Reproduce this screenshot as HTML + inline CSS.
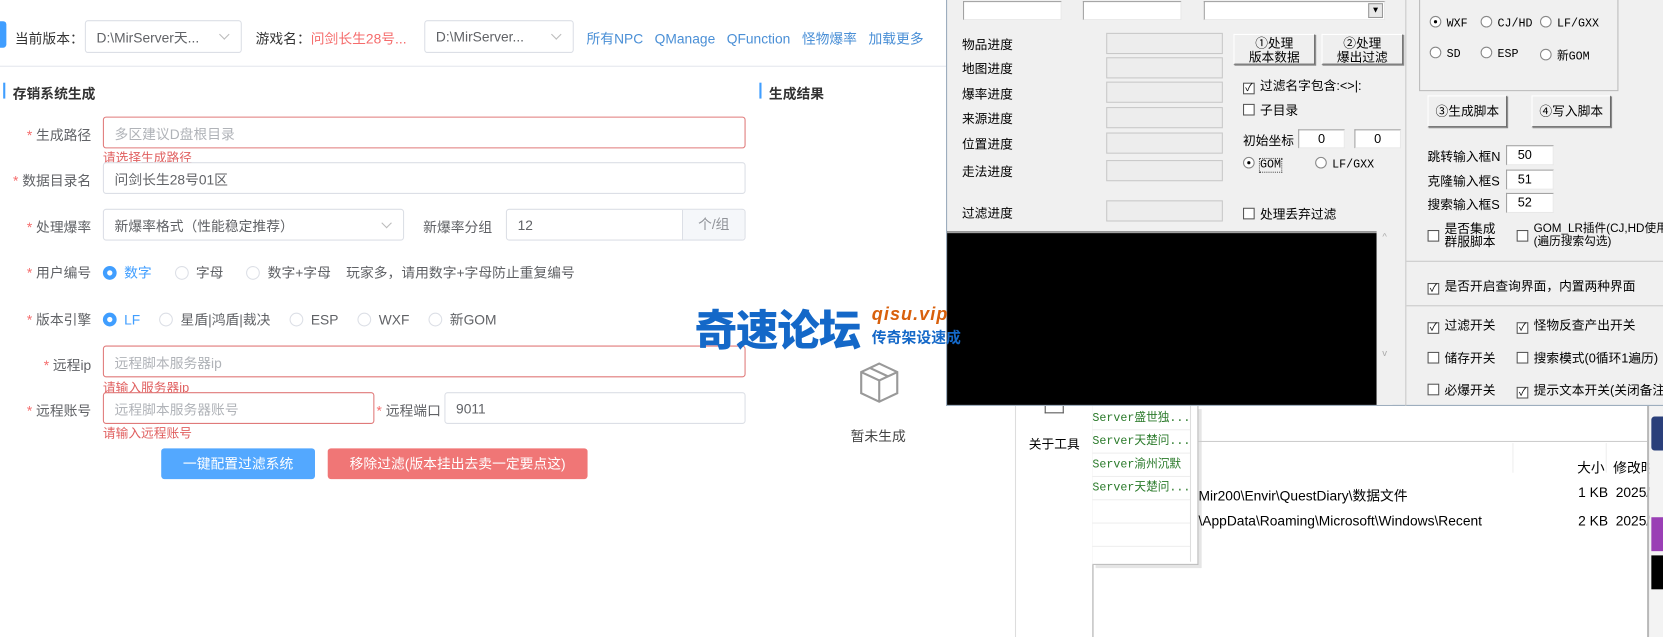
<!DOCTYPE html>
<html><head><meta charset="utf-8"><style>
*{margin:0;padding:0;box-sizing:border-box}
html,body{width:1663px;height:637px;overflow:hidden;background:#fff}
#w{position:absolute;left:0;top:0;width:1568px;height:601px;transform:scale(1.06059,1.05990);transform-origin:0 0;font-family:"Liberation Sans","Noto Sans CJK SC",sans-serif;font-size:13px;color:#606266}
.a{position:absolute;white-space:nowrap}
.in{position:absolute;border:1px solid #dcdfe6;border-radius:3px;background:#fff;padding-left:10px;display:flex;align-items:center}
.err{border-color:#e07a7a}
.ph{color:#b0b3b8}
.et{position:absolute;color:#e06060;font-size:12px}
.lb{position:absolute;text-align:right;width:86px;left:0}
.lb:before{content:"* ";color:#f56c6c}
.chev{position:absolute;right:12px;top:9px;width:7px;height:7px;border-right:1px solid #bbb;border-bottom:1px solid #bbb;transform:rotate(45deg)}
.rd{display:inline-block;width:13px;height:13px;border:1px solid #dcdfe6;border-radius:50%;vertical-align:-2px;margin-right:7px}
.rd.on{border:4px solid #409eff}
.win{font-family:"Liberation Sans","Noto Sans CJK SC",sans-serif;font-size:12px;color:#000}
.tb{position:absolute;background:#fff;border:1px solid #a0a0a0;border-right-color:#e8e8e8;border-bottom-color:#e8e8e8}
.pb{position:absolute;background:#ededed;border:1px solid #c8c8c8;height:20px;width:110px;left:1043px}
.bt{position:absolute;background:#efefef;border:1px solid #fff;border-right-color:#6a6a6a;border-bottom-color:#6a6a6a;box-shadow:1px 1px 0 #888;text-align:center;line-height:13px;font-size:12px}
.cb{display:inline-block;width:11px;height:11px;border:1px solid #555;background:#fff;vertical-align:-1px;margin-right:5px;font-size:10px;line-height:9px;text-align:center}
.wr{display:inline-block;width:11px;height:11px;border:1px solid #888;border-radius:50%;background:#fff;vertical-align:-1px;margin-right:5px;position:relative}
.wr.on:after{content:"";position:absolute;left:3px;top:3px;width:3px;height:3px;background:#000;border-radius:50%}
.m{font-family:"Liberation Mono","Noto Sans CJK SC",monospace;font-size:11px}
.logo{z-index:5}
</style></head><body><div id="w">
<!-- header -->
<div class="a" style="left:0;top:20px;width:6px;height:25px;background:#409eff;border-radius:0 3px 3px 0"></div>
<div class="a" style="left:14px;top:26px;color:#333">当前版本：</div>
<div class="in" style="left:80px;top:19px;width:148px;height:31px">D:\MirServer天...<i class="chev"></i></div>
<div class="a" style="left:241px;top:26px;color:#333">游戏名：<span style="color:#f56c6c">问剑长生28号...</span></div>
<div class="in" style="left:400px;top:19px;width:141px;height:31px">D:\MirServer...<i class="chev"></i></div>
<div class="a" style="left:553px;top:26px;color:#4a8fd6">所有NPC&nbsp;&nbsp;&nbsp;QManage&nbsp;&nbsp;&nbsp;QFunction&nbsp;&nbsp;&nbsp;怪物爆率&nbsp;&nbsp;&nbsp;加载更多</div>
<div class="a" style="left:0;top:62px;width:892px;height:1px;background:#e4e7ed"></div>
<div class="a" style="left:3px;top:78px;width:2px;height:15px;background:#409eff"></div>
<div class="a" style="left:12px;top:78px;font-weight:bold;color:#333">存销系统生成</div>
<div class="a" style="left:716px;top:78px;width:2px;height:15px;background:#409eff"></div>
<div class="a" style="left:725px;top:78px;font-weight:bold;color:#333">生成结果</div>
<!-- form -->
<div class="lb" style="top:117px">生成路径</div>
<div class="in err" style="left:97px;top:110px;width:606px;height:30px"><span class="ph">多区建议D盘根目录</span></div>
<div class="et" style="left:97px;top:140px">请选择生成路径</div>
<div class="lb" style="top:160px">数据目录名</div>
<div class="in" style="left:97px;top:153px;width:606px;height:30px">问剑长生28号01区</div>
<div class="lb" style="top:204px">处理爆率</div>
<div class="in" style="left:97px;top:197px;width:284px;height:30px">新爆率格式（性能稳定推荐）<i class="chev"></i></div>
<div class="a" style="left:399px;top:204px">新爆率分组</div>
<div class="in" style="left:477px;top:197px;width:226px;height:30px">12</div>
<div class="a" style="left:643px;top:198px;width:59px;height:28px;background:#f5f7fa;border-left:1px solid #dcdfe6;text-align:center;line-height:28px;color:#909399;border-radius:0 3px 3px 0">个/组</div>
<div class="lb" style="top:247px">用户编号</div>
<div class="a" style="left:97px;top:247px"><span class="rd on"></span><span style="color:#409eff">数字</span>&nbsp;&nbsp;&nbsp;&nbsp;&nbsp;&nbsp;<span class="rd"></span>字母&nbsp;&nbsp;&nbsp;&nbsp;&nbsp;&nbsp;<span class="rd"></span>数字+字母&nbsp;&nbsp;&nbsp;&nbsp;玩家多，请用数字+字母防止重复编号</div>
<div class="lb" style="top:291px">版本引擎</div>
<div class="a" style="left:97px;top:291px"><span class="rd on"></span><span style="color:#409eff">LF</span>&nbsp;&nbsp;&nbsp;&nbsp;&nbsp;<span class="rd"></span>星盾|鸿盾|裁决&nbsp;&nbsp;&nbsp;&nbsp;&nbsp;<span class="rd"></span>ESP&nbsp;&nbsp;&nbsp;&nbsp;&nbsp;<span class="rd"></span>WXF&nbsp;&nbsp;&nbsp;&nbsp;&nbsp;<span class="rd"></span>新GOM</div>
<div class="lb" style="top:334px">远程ip</div>
<div class="in err" style="left:97px;top:326px;width:606px;height:30px"><span class="ph">远程脚本服务器ip</span></div>
<div class="et" style="left:97px;top:357px">请输入服务器ip</div>
<div class="lb" style="top:377px">远程账号</div>
<div class="in err" style="left:97px;top:370px;width:256px;height:30px"><span class="ph">远程脚本服务器账号</span></div>
<div class="et" style="left:97px;top:400px">请输入远程账号</div>
<div class="a" style="left:355px;top:377px;width:58px;text-align:right"><span style="color:#f56c6c">* </span>远程端口</div>
<div class="in" style="left:419px;top:370px;width:284px;height:30px">9011</div>
<div class="a" style="left:152px;top:423px;width:145px;height:29px;background:#53a8ff;color:#fff;border-radius:3px;text-align:center;line-height:29px">一键配置过滤系统</div>
<div class="a" style="left:309px;top:423px;width:245px;height:29px;background:#f07676;color:#fff;border-radius:3px;text-align:center;line-height:29px">移除过滤(版本挂出去卖一定要点这)</div>
<!-- watermark logo -->
<div class="a logo" style="left:655px;top:280px;font-size:40px;font-weight:900;color:#1468c8;letter-spacing:-1px;font-family:'Noto Sans CJK SC',sans-serif">奇速论坛</div>
<div class="a logo" style="left:822px;top:287px;font-size:17px;font-weight:bold;font-style:italic;color:#d8600c;letter-spacing:1px">qisu.vip</div>
<div class="a logo" style="left:822px;top:308px;font-size:14px;font-weight:bold;color:#1468c8">传奇架设速成</div>
<svg class="a" style="left:808px;top:340px" width="42" height="42" viewBox="0 0 42 42" fill="none" stroke="#999" stroke-width="2"><path d="M21 3 L38 11 L38 31 L21 39 L4 31 L4 11 Z M4 11 L21 19 L38 11 M21 19 L21 39 M12 7 L29 15"/></svg>
<div class="a" style="left:802px;top:401px;color:#444">暂未生成</div>
<!-- background windows -->
<div class="a" style="left:957px;top:383px;width:1px;height:218px;background:#ddd"></div>
<div class="a" style="left:985px;top:383px;width:18px;height:7px;border:1px solid #555;border-top:none"></div>
<div class="a win" style="left:970px;top:410px">关于工具</div>
<div class="a" style="left:1030px;top:383px;width:1px;height:218px;background:#aaa"></div>
<div class="a" style="left:1030px;top:383px;width:100px;height:150px;background:#fff;border:1px solid #bbb;border-top:none;border-left:none;box-shadow:3px 3px 0 #e5e5e5"></div>
<div class="a" style="left:1030px;top:405px;width:92px;height:1px;background:#eee"></div>
<div class="a" style="left:1030px;top:427px;width:92px;height:1px;background:#eee"></div>
<div class="a" style="left:1030px;top:449px;width:92px;height:1px;background:#eee"></div>
<div class="a" style="left:1030px;top:471px;width:92px;height:1px;background:#eee"></div>
<div class="a" style="left:1030px;top:493px;width:92px;height:1px;background:#eee"></div>
<div class="a" style="left:1030px;top:515px;width:92px;height:1px;background:#eee"></div>
<div class="a" style="left:1122px;top:383px;width:1px;height:147px;background:#ddd"></div>
<div class="a m" style="left:1030px;top:384px;color:#2a7a2a;line-height:22px">Server盛世独...<br>Server天楚问...<br>Server渝州沉默<br>Server天楚问...</div>
<div class="a" style="left:1130px;top:416px;width:423px;height:1px;background:#ccc"></div>
<div class="a" style="left:1426px;top:418px;width:1px;height:28px;background:#eee"></div>
<div class="a" style="left:1514px;top:418px;width:1px;height:28px;background:#eee"></div>
<div class="a win" style="left:1487px;top:431px;font-size:13px">大小</div><div class="a win" style="left:1521px;top:431px;font-size:13px">修改时</div>
<div class="a win" style="left:1130px;top:457px;font-size:13px">Mir200\Envir\QuestDiary\数据文件</div>
<div class="a win" style="left:1130px;top:484px;font-size:13px">\AppData\Roaming\Microsoft\Windows\Recent</div>
<div class="a win" style="left:1488px;top:457px;font-size:13px">1 KB&nbsp;&nbsp;2025/9</div>
<div class="a win" style="left:1488px;top:484px;font-size:13px">2 KB&nbsp;&nbsp;2025/1</div>
<div class="a" style="left:1553px;top:383px;width:2px;height:218px;background:#b8b8b8"></div>
<div class="a" style="left:1555px;top:383px;width:13px;height:218px;background:#f3f3f3"></div>
<div class="a" style="left:1557px;top:393px;width:11px;height:32px;background:#2a3f7a;border-radius:3px 0 0 3px"></div>
<div class="a" style="left:1557px;top:488px;width:11px;height:32px;background:#9a3fb5"></div>
<div class="a" style="left:1557px;top:524px;width:11px;height:32px;background:#000"></div>
<!-- overlay window -->
<div class="a win" style="left:892px;top:0;width:676px;height:383px;background:#f0f0f0;border-left:1px solid #9ab;border-bottom:1px solid #9ab"></div>
<div class="win">
<div class="tb" style="left:908px;top:1px;width:93px;height:18px"></div>
<div class="tb" style="left:1021px;top:1px;width:93px;height:18px"></div>
<div class="tb" style="left:1135px;top:1px;width:171px;height:18px"><div style="position:absolute;right:1px;top:1px;width:14px;height:14px;background:#e8e8e8;border:1px solid #999;font-size:8px;text-align:center;line-height:12px">▼</div></div>
<div class="a" style="left:907px;top:33px">物品进度</div><div class="pb" style="top:31px"></div>
<div class="a" style="left:907px;top:56px">地图进度</div><div class="pb" style="top:54px"></div>
<div class="a" style="left:907px;top:80px">爆率进度</div><div class="pb" style="top:77px"></div>
<div class="a" style="left:907px;top:103px">来源进度</div><div class="pb" style="top:101px"></div>
<div class="a" style="left:907px;top:127px">位置进度</div><div class="pb" style="top:125px"></div>
<div class="a" style="left:907px;top:153px">走法进度</div><div class="pb" style="top:151px"></div>
<div class="a" style="left:907px;top:192px">过滤进度</div><div class="pb" style="top:189px"></div>
<div class="bt" style="left:1163px;top:32px;width:77px;height:29px;padding-top:2px">①处理<br>版本数据</div>
<div class="bt" style="left:1246px;top:32px;width:77px;height:29px;padding-top:2px">②处理<br>爆出过滤</div>
<div class="a" style="left:1172px;top:72px"><span class="cb">✓</span>过滤名字包含:&lt;&gt;|:</div>
<div class="a" style="left:1172px;top:95px"><span class="cb"></span>子目录</div>
<div class="a" style="left:1172px;top:124px">初始坐标</div>
<div class="tb" style="left:1224px;top:122px;width:44px;height:18px;text-align:center;line-height:16px">0</div>
<div class="tb" style="left:1277px;top:122px;width:44px;height:18px;text-align:center;line-height:16px">0</div>
<div class="a m" style="left:1172px;top:148px"><span class="wr on"></span><span style="outline:1px dotted #555">GOM</span></div>
<div class="a m" style="left:1240px;top:148px"><span class="wr"></span>LF/GXX</div>
<div class="a" style="left:1172px;top:193px"><span class="cb"></span>处理丢弃过滤</div>
<div class="a" style="left:893px;top:218px;width:405px;height:164px;background:#000;border-top:2px solid #a0a0a0"></div>
<div class="a" style="left:1298px;top:218px;width:15px;height:164px;background:#f0f0f0;color:#aaa;font-size:9px;text-align:center">^<br><br><br><br><br><br><br><br><br><br><br>v</div>
<div class="a" style="left:1325px;top:0;width:1px;height:383px;background:#c8c8c8"></div>
<div class="a" style="left:1338px;top:-2px;width:188px;height:88px;border:1px solid #bbb"></div>
<div class="a m" style="left:1348px;top:15px"><span class="wr on"></span>WXF</div>
<div class="a m" style="left:1396px;top:15px"><span class="wr"></span>CJ/HD</div>
<div class="a m" style="left:1452px;top:15px"><span class="wr"></span>LF/GXX</div>
<div class="a m" style="left:1348px;top:44px"><span class="wr"></span>SD</div>
<div class="a m" style="left:1396px;top:44px"><span class="wr"></span>ESP</div>
<div class="a m" style="left:1452px;top:44px"><span class="wr"></span>新GOM</div>
<div class="bt" style="left:1346px;top:90px;width:75px;height:30px;line-height:28px">③生成脚本</div>
<div class="bt" style="left:1444px;top:90px;width:75px;height:30px;line-height:28px">④写入脚本</div>
<div class="a" style="left:1346px;top:139px">跳转输入框N</div><div class="tb" style="left:1420px;top:137px;width:45px;height:19px;padding-left:10px;line-height:17px">50</div>
<div class="a" style="left:1346px;top:162px">克隆输入框S</div><div class="tb" style="left:1420px;top:160px;width:45px;height:19px;padding-left:10px;line-height:17px">51</div>
<div class="a" style="left:1346px;top:184px">搜索输入框S</div><div class="tb" style="left:1420px;top:182px;width:45px;height:19px;padding-left:10px;line-height:17px">52</div>
<div class="a" style="left:1346px;top:216px"><span class="cb"></span></div>
<div class="a" style="left:1362px;top:210px;line-height:12px">是否集成<br>群服脚本</div>
<div class="a" style="left:1430px;top:216px"><span class="cb"></span></div>
<div class="a" style="left:1446px;top:210px;line-height:12px;font-size:11px">GOM_LR插件(CJ,HD使用)<br>(遍历搜索勾选)</div>
<div class="a" style="left:1326px;top:246px;width:242px;height:1px;background:#c8c8c8"></div>
<div class="a" style="left:1346px;top:261px"><span class="cb">✓</span>是否开启查询界面，内置两种界面</div>
<div class="a" style="left:1326px;top:288px;width:242px;height:1px;background:#c8c8c8"></div>
<div class="a" style="left:1346px;top:298px"><span class="cb">✓</span>过滤开关</div>
<div class="a" style="left:1430px;top:298px"><span class="cb">✓</span>怪物反查产出开关</div>
<div class="a" style="left:1346px;top:329px"><span class="cb"></span>储存开关</div>
<div class="a" style="left:1430px;top:329px"><span class="cb"></span>搜索模式(0循环1遍历)</div>
<div class="a" style="left:1346px;top:359px"><span class="cb"></span>必爆开关</div>
<div class="a" style="left:1430px;top:359px"><span class="cb">✓</span>提示文本开关(关闭备注)</div>
</div>
</div></body></html>
